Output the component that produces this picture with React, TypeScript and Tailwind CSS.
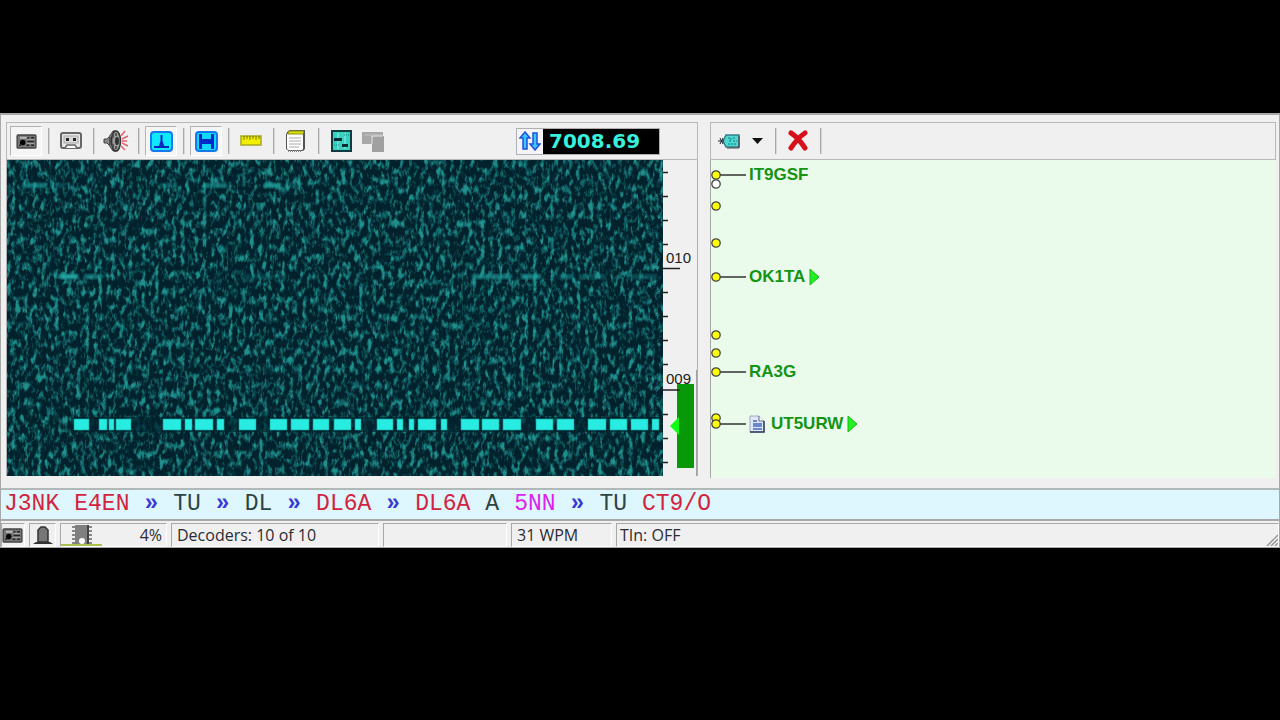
import { useState, type ReactNode } from "react";
import clsx from "clsx";

// [start, length] of every keyed element on the trace
const keying = [
  [67, 15], [92, 8], [102, 5], [109, 15], [156, 18], [178, 7], [188, 18],
  [210, 7], [232, 17], [263, 17], [284, 18], [306, 16], [327, 17], [348, 6],
  [370, 16], [390, 6], [402, 5], [411, 18], [434, 6], [454, 18], [475, 17],
  [496, 18], [529, 17], [550, 17], [581, 18], [603, 17], [624, 17], [645, 7],
];

// weak signals: x, y, length, opacity
const weakSignals = [
  [15, 23, 25, 0.6], [44, 23, 14, 0.3], [152, 23, 18, 0.3], [196, 23, 24, 0.55],
  [257, 23, 17, 0.8], [278, 23, 16, 0.3], [53, 114, 18, 0.95], [77, 114, 17, 0.55],
  [465, 114, 40, 0.6], [514, 114, 20, 0.65], [553, 114, 14, 0.45], [573, 114, 26, 0.3],
  [236, 114, 40, 0.2], [620, 114, 30, 0.3],
];

const ticks = [12, 36, 60, 84, 132, 156, 180, 204, 254, 278, 302];

const spots = [
  { y: 24, color: "#ffffff" },
  { y: 15, color: "#ffff00", call: "IT9GSF" },
  { y: 46, color: "#ffff00" },
  { y: 83, color: "#ffff00" },
  { y: 117, color: "#ffff00", call: "OK1TA", cq: true },
  { y: 175, color: "#ffff00" },
  { y: 193, color: "#ffff00" },
  { y: 212, color: "#ffff00", call: "RA3G" },
  { y: 258, color: "#ffff00" },
  { y: 264, color: "#ffff00", call: "UT5URW", cq: true, note: true },
];

const decoded = [
  { text: "J3NK", className: "text-[#d22440]" },
  { text: "E4EN", className: "text-[#d22440]" },
  { text: "»", className: "font-bold text-[#3a3ad8]" },
  { text: "TU", className: "text-[#2c4444]" },
  { text: "»", className: "font-bold text-[#3a3ad8]" },
  { text: "DL", className: "text-[#2c4444]" },
  { text: "»", className: "font-bold text-[#3a3ad8]" },
  { text: "DL6A", className: "text-[#d22440]" },
  { text: "»", className: "font-bold text-[#3a3ad8]" },
  { text: "DL6A", className: "text-[#d22440]" },
  { text: "A", className: "text-[#2c4444]" },
  { text: "5NN", className: "text-[#dd22ee]" },
  { text: "»", className: "font-bold text-[#3a3ad8]" },
  { text: "TU", className: "text-[#2c4444]" },
  { text: "CT9/O", className: "text-[#d22440]" },
];

function RadioIcon() {
  return (
    <svg width="21" height="15" viewBox="0 0 22 16">
      <rect x="1" y="1" width="20" height="14" rx="1" fill="#777" stroke="#444" strokeWidth="1.5" />
      <rect x="4" y="3" width="7" height="2" fill="#bbb" />
      <circle cx="7" cy="9" r="3" fill="#000" />
      <path d="M12 4h2M16 4h3M12 8h7M3 12h2M11 12h3M16 12h3" stroke="#222" strokeWidth="1.5" />
      <path d="M12 6h7M11 10h8" stroke="#aaa" />
    </svg>
  );
}

function CassetteIcon() {
  return (
    <svg width="22" height="18" viewBox="0 0 22 18">
      <rect x="1" y="1" width="20" height="15" rx="2" fill="#e8e8e8" stroke="#666" strokeWidth="2" />
      <rect x="4" y="4" width="14" height="7" fill="#d8d8d8" stroke="#aaa" />
      <path d="M6 6h3v3H6zM13 6h3v3h-3z" fill="#222" />
      <path d="M5 16l2-3h8l2 3" fill="#fff" stroke="#666" strokeWidth="1.5" />
    </svg>
  );
}

function SpeakerIcon() {
  return (
    <svg width="26" height="24" viewBox="0 0 26 24">
      <path d="M1 10h3l2-2 4-6h3v20h-3l-4-6-2-2H1z" fill="#888" stroke="#444" />
      <ellipse cx="13" cy="12" rx="4.500" ry="10" fill="#999" stroke="#333" strokeWidth="1.500" />
      <path d="M7 8v8M10 4v5M10 15v5M13 4v3M13 17v3" stroke="#444" strokeWidth="1.500" />
      <ellipse cx="14" cy="12" rx="2" ry="4" fill="#333" />
      <path d="M18 7l4-5M19 10l6-3M19 12h5M19 14l6 3M18 17l4 4" stroke="#e8606a" strokeWidth="1.500" />
    </svg>
  );
}

function SpectrumIcon() {
  return (
    <svg width="23" height="21" viewBox="0 0 23 21">
      <rect x="1" y="1" width="21" height="19" rx="3" fill="#10e8ff" stroke="#1478f0" strokeWidth="2" />
      <path d="M4 15h15v2H4z" fill="#0028c0" />
      <path d="M10.500 4h2v6l2 6h-6l2-6z" fill="#0028c0" />
    </svg>
  );
}

function WaterfallIcon() {
  return (
    <svg width="23" height="21" viewBox="0 0 23 21">
      <rect x="1" y="1" width="21" height="19" rx="3" fill="#10d8ff" stroke="#1478f0" strokeWidth="2" />
      <path d="M4 3h3v5h9V3h3v15h-3v-5H7v5H4z" fill="#0028c8" />
    </svg>
  );
}

function RulerIcon() {
  return (
    <svg width="22" height="12" viewBox="0 0 22 12">
      <rect x="1" y="1" width="20" height="9" fill="#f0f000" stroke="#a8a820" strokeWidth="1.500" />
      <path d="M4 1v4M7 1v3M10 1v4M13 1v3M16 1v4M19 1v3" stroke="#777700" />
    </svg>
  );
}

function NotepadIcon() {
  return (
    <svg width="22" height="24" viewBox="0 0 22 24">
      <path d="M3 2l2-1h15v19l-2 2H4l-3-2V5z" fill="#555" />
      <path d="M2 5h16v15l-1 1H4l-2-1z" fill="#fff" />
      <path d="M3 4l1-2h15l-1 3H3z" fill="#d8e000" stroke="#8a8c20" />
      <path d="M4 9h12M4 12h12M4 15h12M4 18h10" stroke="#aaa" />
      <path d="M3 22h14" stroke="#888" strokeWidth="2" strokeDasharray="1 1" />
    </svg>
  );
}

function SettingsIcon() {
  return (
    <svg width="21" height="22" viewBox="0 0 21 22">
      <rect x="1" y="1" width="19" height="20" fill="#38d0c0" stroke="#103c40" strokeWidth="2" />
      <path d="M7 3v16M14 3v16" stroke="#90f0e4" />
      <path d="M3 8h8v3H3zM11 14h6v3h-6z" fill="#052c30" />
      <path d="M13 5h5M3 15h5" stroke="#0a8c88" strokeDasharray="1 1" />
    </svg>
  );
}

function WindowsIcon() {
  return (
    <svg width="24" height="21" viewBox="0 0 24 21">
      <path d="M1 1h21v12H1z" fill="#a8a8a8" />
      <path d="M1 13h8v3H1zM9 13h2v8H9z" fill="#f0f0f0" />
      <rect x="11" y="5" width="12" height="16" fill="#a0a0a0" />
      <path d="M11 13V5h11" fill="none" stroke="#e8e8e8" />
      <path d="M4 4h17" stroke="#c8c8c8" />
    </svg>
  );
}

function TuneIcon() {
  return (
    <svg width="22" height="20" viewBox="0 0 22 20">
      <path d="M6 1l5 6H8v11H4V7H1z" fill="#38c8ff" stroke="#2050d8" strokeWidth="1.500" />
      <path d="M16 19l-5-6h3V2h4v11h3z" fill="#38c8ff" stroke="#2050d8" strokeWidth="1.500" />
    </svg>
  );
}

function TagIcon() {
  return (
    <svg width="23" height="16" viewBox="0 0 23 16">
      <path d="M5 8l3-6h13v12H8z" fill="#50d8d0" stroke="#308088" strokeWidth="1.500" />
      <path d="M0 8h6M2 5l3 6M5 5l-3 6" stroke="#223" />
      <path d="M10 5h3v3h-3M15 5h3M15 8h4M10 11h8" stroke="#0a8088" fill="none" strokeDasharray="2 1" />
      <path d="M21 3v12H9" stroke="#444" fill="none" />
    </svg>
  );
}

function NoteIcon() {
  return (
    <svg width="16" height="18" viewBox="0 0 16 18">
      <path d="M1 1h9l5 5v11H1z" fill="#dfe6f6" stroke="#a0a8c0" />
      <path d="M15 6v11H1" fill="none" stroke="#303858" strokeWidth="1.500" />
      <path d="M10 1v5h5" fill="#fff" stroke="#606880" />
      <path d="M4 6h4M4 9h9M4 11h9M4 14h9" stroke="#4868c0" strokeWidth="1.500" />
    </svg>
  );
}

function BellIcon() {
  return (
    <svg width="20" height="19" viewBox="0 0 20 19">
      <path d="M5 16V4l3-3h4l3 3v12z" fill="#777" stroke="#333" strokeWidth="1.500" />
      <path d="M0 18l3-2h14l3 2z" fill="#333" />
    </svg>
  );
}

function ChipIcon() {
  return (
    <svg width="22" height="19" viewBox="0 0 22 19">
      <path d="M1 2h20M1 6h20M1 10h20M1 14h20M1 18h20" stroke="#666" strokeWidth="1.500" />
      <rect x="4" y="0" width="14" height="19" fill="#808080" />
      <path d="M17 0v19" stroke="#444" strokeWidth="2" />
      <circle cx="11" cy="16" r="3" fill="#fff" />
    </svg>
  );
}

function ToolButton({ label, pressed, onClick, children }: {
  label: string;
  pressed?: boolean;
  onClick?: () => void;
  children: ReactNode;
}) {
  return (
    <button
      type="button"
      aria-label={label}
      onClick={onClick}
      className={clsx(
        "flex h-[30px] w-8 items-center justify-center border",
        pressed
          ? "border-t-[#b4b4b4] border-l-[#b4b4b4] border-r-white border-b-white bg-[#f5f5f5]"
          : "border-transparent",
      )}
    >
      {children}
    </button>
  );
}

function Separator() {
  return (
    <div className="flex w-[13px] justify-center">
      <div className="h-[26px] w-[2px] border-r border-l border-r-[#d8d8d8] border-l-[#a8a8a8]" />
    </div>
  );
}

function Waterfall() {
  return (
    <svg className="h-[316px] min-w-0 flex-1" viewBox="0 0 656 316" preserveAspectRatio="none">
      <filter id="noise" x="0" y="0" width="1" height="1" colorInterpolationFilters="sRGB">
        <feTurbulence type="fractalNoise" baseFrequency="0.23 0.117" numOctaves="3" seed="11" />
        <feColorMatrix values="0 0 0 0 0.12  0 0 0 0 0.56  0 0 0 0 0.55  2.3 2.3 0 0 -2.15" />
      </filter>
      <filter id="soft">
        <feGaussianBlur stdDeviation="1" />
      </filter>
      <rect width="656" height="316" fill="#00222d" />
      <rect width="656" height="316" filter="url(#noise)" />
      {weakSignals.map(([x, y, w, o]) => (
        <rect key={`${x}-${y}`} x={x} y={y} width={w} height="5" fill="#20a8a4" opacity={o} filter="url(#soft)" />
      ))}
      <rect x="64" y="257" width="592" height="15" fill="#00222d" opacity="0.7" />
      {keying.map(([x, w]) => (
        <rect key={x} x={x} y="259" width={w} height="11" fill="#28ece2" stroke="#14a09c" strokeWidth="0.6" />
      ))}
    </svg>
  );
}

function FrequencyScale() {
  return (
    <svg className="h-[316px] w-[34px] shrink-0" viewBox="0 0 34 316">
      {ticks.map((y) => (
        <path key={y} d={`M0 ${y + 0.5}h5`} stroke="#222" strokeWidth="1.5" />
      ))}
      <rect x="14" y="224" width="17" height="84" fill="#089808" />
      <path d="M0 108.500h17M0 230h17" stroke="#222" strokeWidth="1.500" />
      <path d="M7 266l9-9v18z" fill="#10ff10" />
      <path d="M33.500 210v106" stroke="#a0a0a0" />
      <text x="3" y="103" className="font-['Liberation_Sans',sans-serif] text-[15px]" fill="#222">010</text>
      <text x="3" y="224" className="font-['Liberation_Sans',sans-serif] text-[15px]" fill="#222">009</text>
    </svg>
  );
}

function BandMap() {
  return (
    <div className="relative h-[318px] border-l border-[#a8a8a8] bg-[#ebfbeb]">
      {spots.map((spot) => (
        <div key={spot.y} className="absolute left-0 flex h-5 -translate-y-1/2 items-center" style={{ top: spot.y }}>
          <svg width="35" height="10" viewBox="0 0 35 10" className="mr-[3px]">
            {spot.call && <path d="M9 5h26" stroke="#333" strokeWidth="1.5" />}
            <circle cx="5" cy="5" r="4.200" fill={spot.color} stroke="#444" strokeWidth="1.300" />
          </svg>
          {spot.note && (
            <span className="mr-[6px]">
              <NoteIcon />
            </span>
          )}
          {spot.call && <span className="text-[17px] font-bold text-[#149414]">{spot.call}</span>}
          {spot.cq && (
            <svg width="12" height="18" viewBox="0 0 12 18" className="ml-1">
              <path d="M1 1l9 8-9 8z" fill="#20f020" stroke="#18b818" />
            </svg>
          )}
        </div>
      ))}
    </div>
  );
}

function StatusCell({ className, children }: { className?: string; children?: ReactNode }) {
  return (
    <div className={clsx("flex h-6 items-center border border-t-[#a8a8a8] border-l-[#a8a8a8] border-r-white border-b-white", className)}>
      {children}
    </div>
  );
}

export default function App() {
  const [spectrum, setSpectrum] = useState(true);
  const [waterfall, setWaterfall] = useState(true);

  return (
    <div className="min-h-screen bg-black pt-[113px] font-['Liberation_Sans',sans-serif]">
      <main className="border-t-2 border-r border-l border-[#a8a8a8] bg-[#f0f0f0]">
        <div className="grid grid-cols-[691fr_567fr] gap-3 pt-[7px] pr-[3px] pb-[10px] pl-[5px]">
          <section>
            <div className="flex h-[38px] items-center border border-[#b8b8b8] pl-[3px]">
              <ToolButton label="Radio" pressed><RadioIcon /></ToolButton>
              <Separator />
              <ToolButton label="Recorder"><CassetteIcon /></ToolButton>
              <Separator />
              <ToolButton label="Audio"><SpeakerIcon /></ToolButton>
              <Separator />
              <ToolButton label="Spectrum" pressed={spectrum} onClick={() => setSpectrum(!spectrum)}>
                <SpectrumIcon />
              </ToolButton>
              <Separator />
              <ToolButton label="Waterfall" pressed={waterfall} onClick={() => setWaterfall(!waterfall)}>
                <WaterfallIcon />
              </ToolButton>
              <Separator />
              <ToolButton label="Scale"><RulerIcon /></ToolButton>
              <Separator />
              <ToolButton label="Notes"><NotepadIcon /></ToolButton>
              <Separator />
              <ToolButton label="Settings"><SettingsIcon /></ToolButton>
              <ToolButton label="Windows"><WindowsIcon /></ToolButton>
              <div className="mr-[37px] ml-auto flex h-[27px] border border-[#b0b0b0]">
                <button type="button" aria-label="Tune" className="flex w-[26px] items-center justify-center bg-[#f4f4fa]">
                  <TuneIcon />
                </button>
                <output className="flex w-[116px] items-center bg-black pl-[6px] font-['DejaVu_Sans',sans-serif] text-[20px] font-bold text-[#38f0dc]">
                  7008.69
                </output>
              </div>
            </div>
            <div className="flex border-r border-l border-[#b0b0b0]">
              <Waterfall />
              <FrequencyScale />
            </div>
          </section>

          <section>
            <div className="flex h-[38px] items-center border border-[#b8b8b8] pl-[2px]">
              <ToolButton label="Spot"><TagIcon /></ToolButton>
              <button type="button" aria-label="Spot options" className="flex h-[30px] w-6 items-center justify-center">
                <svg width="11" height="6" viewBox="0 0 11 6">
                  <path d="M0 0h11L5.500 6z" fill="#111" />
                </svg>
              </button>
              <Separator />
              <ToolButton label="Clear">
                <svg width="22" height="24" viewBox="0 0 22 24">
                  <path d="M4 4c5 3 10 9 14 15M18 4C12 8 8 13 4 19" fill="none" stroke="#d8101c" strokeWidth="5" strokeLinecap="round" />
                </svg>
              </ToolButton>
              <Separator />
            </div>
            <BandMap />
          </section>
        </div>

        <div className="flex h-[31px] items-center gap-[15px] overflow-hidden border-t-2 border-[#b0b8b8] bg-[#def6fd] pl-[3px] font-['Liberation_Mono',monospace] text-[23px]">
          {decoded.map((word, index) => (
            <span key={index} className={word.className}>{word.text}</span>
          ))}
        </div>

        <footer className="flex gap-1 overflow-hidden border-t-2 border-b border-[#a8a8a8] pt-[2px] font-['Open_Sans',sans-serif] text-[16px] text-[#2c2c34]">
          <StatusCell className="w-6"><RadioIcon /></StatusCell>
          <StatusCell className="w-[27px] justify-center"><BellIcon /></StatusCell>
          <StatusCell className="w-[107px] justify-between pr-1">
            <div className="flex h-full w-[41px] items-center justify-center border-b-2 border-[#a8c050]">
              <ChipIcon />
            </div>
            4%
          </StatusCell>
          <StatusCell className="w-[208px] pl-[5px]">Decoders: 10 of 10</StatusCell>
          <StatusCell className="w-[124px]" />
          <StatusCell className="w-[101px] pl-[5px]">31 WPM</StatusCell>
          <StatusCell className="flex-1 justify-between pl-[3px]">
            TIn: OFF
            <svg width="12" height="12" viewBox="0 0 12 12" className="self-end">
              <path d="M1 12L12 1M5 12l7-7M9 12l3-3" stroke="#999" strokeWidth="1.500" />
            </svg>
          </StatusCell>
        </footer>
      </main>
    </div>
  );
}
